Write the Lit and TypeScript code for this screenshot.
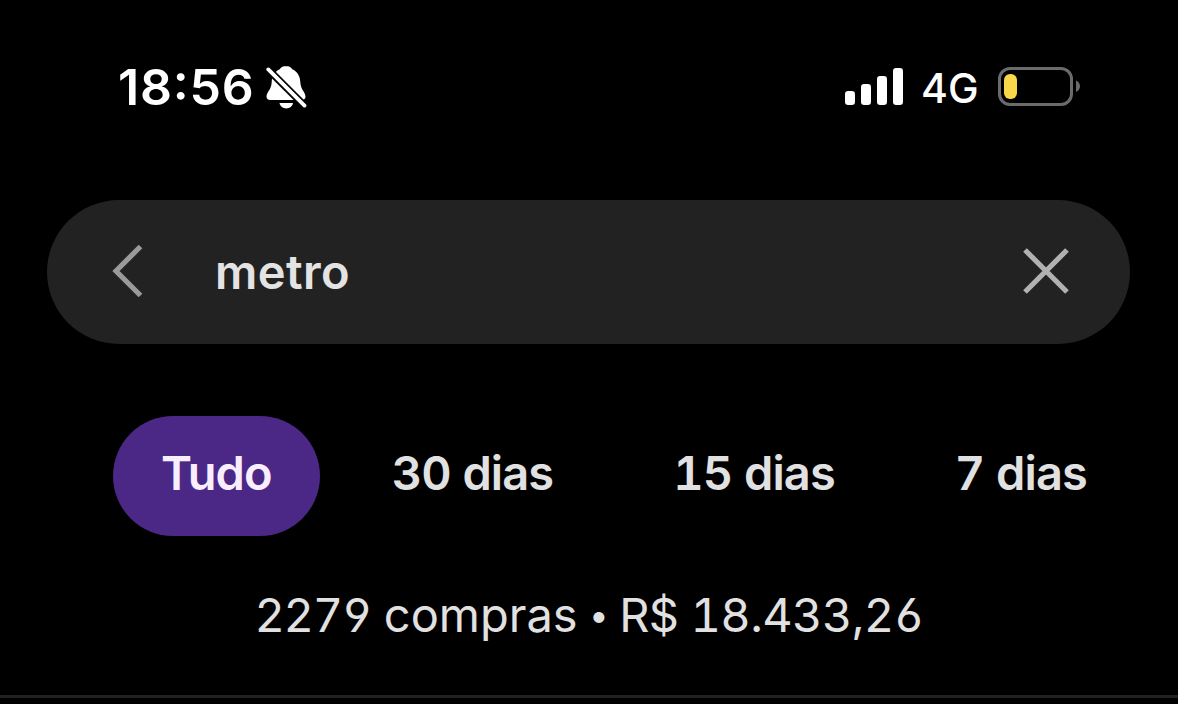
import { LitElement, html, css } from 'lit';
import { customElement, property, state } from 'lit/decorators.js';

interface Period {
  label: string;
  value: string;
}

const PERIODS: Period[] = [
  { label: 'Tudo', value: 'all' },
  { label: '30 dias', value: '30' },
  { label: '15 dias', value: '15' },
  { label: '7 dias', value: '7' },
];

/** Phone status bar: clock, silent mode, signal, network and battery. */
@customElement('status-bar')
export class StatusBar extends LitElement {
  @property() time = '';
  @property() network = '';

  static styles = css`
    :host {
      display: flex;
      align-items: center;
      justify-content: space-between;
      box-sizing: border-box;
      height: 76px;
      padding: 0 98px 0 118px;
      color: #fff;
    }
    .left,
    .right {
      display: flex;
      align-items: center;
    }
    .time {
      width: 148px;
      font-size: 50px;
      font-weight: 600;
      line-height: 60px;
      letter-spacing: 0.8px;
      font-feature-settings: 'case';
      white-space: nowrap;
    }
    .network {
      width: 77px;
      margin-left: 17px;
      padding-top: 2px;
      font-size: 41px;
      font-weight: 500;
      line-height: 60px;
      white-space: nowrap;
    }
    svg {
      display: block;
    }
    .battery {
      margin-top: -2px;
    }
  `;

  render() {
    return html`
      <div class="left">
        <span class="time">${this.time}</span>
        <svg width="42" height="44" viewBox="266 65 42 44">
          <path
            d="M286 66c-3.300 0-5.300 1.500-6.200 3.200-4.800 1.900-7.900 6.300-8.100 12.800-.3 8-5.200 10-5.200 14.500 0 2.300 1.400 3.500 3.500 3.500h32c2.200 0 3.500-1.200 3.500-3.500 0-4.500-4.900-6.500-5.200-14.500-.3-6.500-3.300-10.900-8.100-12.800-.9-1.700-2.900-3.200-6.200-3.200z"
            fill="#fff"
          />
          <path d="M279.500 103h13.500c-.6 3.200-3.200 5.400-6.700 5.400s-6.200-2.200-6.800-5.400z" fill="#fff" />
          <path d="M264 65.200l44 44" stroke="#000" stroke-width="7.400" />
          <path d="M268.300 69.400l36.200 36.200" stroke="#fff" stroke-width="3.800" stroke-linecap="round" />
        </svg>
      </div>
      <div class="right">
        <svg width="59" height="38" viewBox="0 0 59 38" fill="#fff">
          <rect x="0" y="23" width="10" height="14" rx="3.200" />
          <rect x="16" y="16" width="10" height="21" rx="3.200" />
          <rect x="32" y="8" width="10" height="29" rx="3.200" />
          <rect x="48" y="0" width="10" height="37" rx="3.200" />
        </svg>
        <span class="network">${this.network}</span>
        <svg class="battery" width="82" height="40" viewBox="998 66 82 40">
          <rect x="999.500" y="68.500" width="72" height="36" rx="10.500" fill="none" stroke="#6b6b6d" stroke-width="3" />
          <path d="M1076 80.500c2.500 1 4 3.200 4 5.800s-1.500 4.800-4 5.800z" fill="#6b6b6d" />
          <rect x="1004" y="74" width="13" height="25" rx="6" fill="#fad749" />
        </svg>
      </div>
    `;
  }
}

/** Rounded search field with back and clear buttons. */
@customElement('search-field')
export class SearchField extends LitElement {
  @property() value = '';

  static styles = css`
    :host {
      display: flex;
      align-items: center;
      box-sizing: border-box;
      height: 144px;
      padding: 0 60px 0 65px;
      border-radius: 72px;
      background: #222;
    }
    button {
      padding: 0;
      border: none;
      background: none;
      cursor: pointer;
    }
    svg {
      display: block;
      fill: none;
      stroke-width: 5.200;
    }
    .back {
      margin-top: -2px;
      stroke: #9a9a9a;
    }
    .clear {
      margin-top: -3px;
      stroke: #b1b1b1;
    }
    .text {
      flex: 1;
      padding-left: 72px;
      color: #e3e3e3;
      font-size: 47px;
      font-weight: 600;
      line-height: 60px;
      letter-spacing: 0.4px;
    }
  `;

  private _onClear() {
    this.dispatchEvent(new CustomEvent('clear', { bubbles: true, composed: true }));
  }

  render() {
    return html`
      <button class="back" aria-label="Voltar">
        <svg width="31" height="54" viewBox="112 244 31 54">
          <path d="M140.500 246.500L116 271l24.500 24.500" />
        </svg>
      </button>
      <span class="text">${this.value}</span>
      <button class="clear" aria-label="Limpar" @click=${this._onClear}>
        <svg width="48" height="48" viewBox="1022 247 48 48">
          <path d="M1025 250l42 42M1067 250l-42 42" />
        </svg>
      </button>
    `;
  }
}

/** Row of period filters, a single one active. */
@customElement('period-chips')
export class PeriodChips extends LitElement {
  @property() value = '';
  @property({ attribute: false }) periods: Period[] = [];

  static styles = css`
    :host {
      display: flex;
      gap: 24px;
      padding-left: 113px;
    }
    .chip {
      flex: none;
      height: 120px;
      padding: 0 48px 8px;
      border: none;
      border-radius: 60px;
      background: none;
      color: #e1e1e1;
      font: inherit;
      font-size: 47px;
      font-weight: 600;
      letter-spacing: -0.9px;
      cursor: pointer;
      white-space: nowrap;
    }
    .chip[aria-pressed='true'] {
      background: #4b2886;
      color: #f8eefe;
    }
  `;

  private _select(value: string) {
    if (value === this.value) return;
    this.dispatchEvent(new CustomEvent('period-change', { detail: { value }, bubbles: true, composed: true }));
  }

  render() {
    return this.periods.map(
      (p) => html`
        <button class="chip" aria-pressed=${p.value === this.value ? 'true' : 'false'} @click=${() => this._select(p.value)}>
          ${p.label}
        </button>
      `,
    );
  }
}

@customElement('app-root')
export class AppRoot extends LitElement {
  @state() private _query = 'metro';
  @state() private _period = 'all';

  static styles = css`
    :host {
      display: flex;
      flex-direction: column;
      box-sizing: border-box;
      height: 704px;
      padding-top: 49px;
      overflow: hidden;
      background: #000;
      font-family: Inter, 'Liberation Sans', sans-serif;
    }
    search-field {
      margin: 75px 48px 0 47px;
    }
    period-chips {
      margin-top: 72px;
      font-feature-settings: 'tnum';
    }
    .summary {
      height: 159px;
      padding-top: 49px;
      box-sizing: border-box;
      color: #e1e1e1;
      font-size: 47px;
      font-weight: 400;
      line-height: 60px;
      text-align: center;
      font-feature-settings: 'tnum', 'cv03', 'cv04';
      white-space: nowrap;
    }
    .number {
      letter-spacing: -1.3px;
    }
    .amount {
      letter-spacing: -0.6px;
    }
    .dot {
      margin: 0 1px 0 2px;
      font-size: 35px;
      line-height: 1;
      vertical-align: 4px;
    }
    .divider {
      height: 3px;
      background: #222;
    }
  `;

  render() {
    return html`
      <status-bar time="18:56" network="4G"></status-bar>
      <search-field .value=${this._query} @clear=${() => (this._query = '')}></search-field>
      <period-chips
        .periods=${PERIODS}
        .value=${this._period}
        @period-change=${(e: CustomEvent) => (this._period = e.detail.value)}
      ></period-chips>
      <div class="summary">
        <span class="number">2279</span> compras<span class="dot"> • </span><span class="amount">R$ 18.433,26</span>
      </div>
      <div class="divider"></div>
    `;
  }
}
